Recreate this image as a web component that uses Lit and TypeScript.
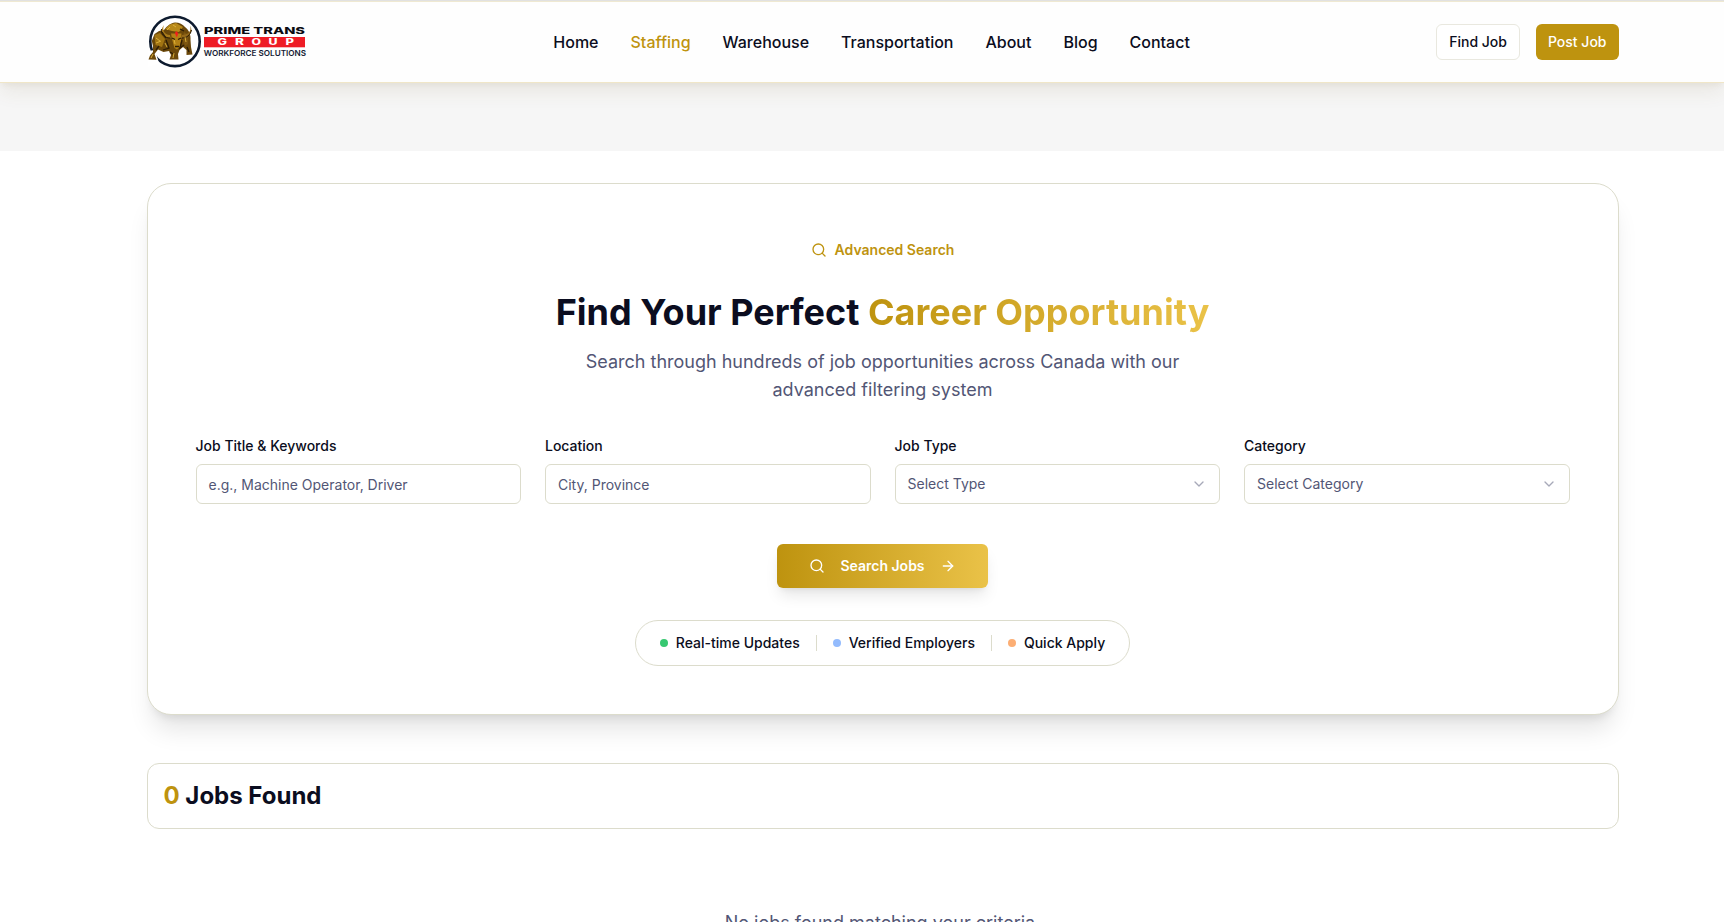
import { LitElement, html, css, svg } from "lit";
import { customElement } from "lit/decorators.js";

const searchIcon = html`<svg class="icon" viewBox="0 0 24 24"><circle cx="11" cy="11" r="8"></circle><path d="m21 21-4.3-4.3"></path></svg>`;
const arrowIcon = html`<svg class="icon" viewBox="0 0 24 24"><path d="M5 12h14"></path><path d="m12 5 7 7-7 7"></path></svg>`;
const chevronIcon = html`<svg class="icon chevron" viewBox="0 0 24 24"><path d="m6 9 6 6 6-6"></path></svg>`;

const bull = svg`
  <circle cx="27" cy="26.4" r="24.7" fill="#fff" stroke="#0d1a2e" stroke-width="2.600"></circle>
  <path d="M0 36 7 35 11 48 0 52z" fill="#fff"></path>
  <path d="M16 15 C19 11 23 8 27 7.600 C31 7.500 35 9.500 37 12 C41 15 43 20 42.500 25 L43 32 L44.500 39.500 L38.500 40 L38.500 35 L35 32 L31.500 35 L30 39 L30.500 44.500 L21.500 44.600 L23 40 L21 36 L15.500 37 L10 34.500 L6.500 39 L8.500 44.800 L.5 44.600 L2 40.500 L5 37 L5 31 L3.800 26 L6.500 19 L11 16 Z" fill="#6b480a"></path>
  <path d="M17 14 22 9.500 28 8 35 12 31 17 24 16z" fill="#b88919"></path>
  <path d="M6.500 20 12 18 17 24 14 32 7.500 30z" fill="#a17412"></path>
  <path d="M36 17 40.500 20 40 29 37.500 31 34.500 25z" fill="#7d5610"></path>
  <path d="M23 18.500 33.500 18.500 33 26 31.500 32 29 34.500 26.500 33 24.500 26z" fill="#b28015"></path>
  <path d="M16 10 C14 15 16 19.500 22 20 L22.500 23 C15 23.500 10.500 17 16 10z" fill="#a97c1c"></path>
  <path d="M42 10.500 C44 16 40 20 34 20 L33 23 C41 23.500 46 17 42 10.500z" fill="#94691a"></path>
  <path d="M13.500 14c-1 5 3 9 8.500 9M43.500 15c-1 5-5 8-9.500 8" stroke="#2c1c04" stroke-width="1" fill="none"></path>
  <path d="M19 15l3-3M25 10l3 2M8 23l4 3M8 28l5-2M17 28l2 4M26 24l1 5M37 22l1 5M26 38l-1 5M5 39l-2 4" stroke="#e0b53d" stroke-width=".9" fill="none"></path>
  <path d="M18 25 21 33 15 35M34 25 32 33 36 30M24 23l3 1.500M33 23l-3 1.500M11 31l-3 4M27 31.500h4M22 37l3 2M14 17l4 6M32 14l4 2M39 32l2 5" stroke="#2c1c04" stroke-width="1.300" fill="none"></path>
  <path d="M26.800 18 28.600 16 30.200 18.500 28.800 22.500z" fill="#f0201c"></path>`;

@customElement("brand-logo")
class BrandLogo extends LitElement {
  static styles = css`
    :host { display: block; width: 160px; height: 54px; }
    svg { display: block; width: 160px; height: 54px; }
    text { font-family: Inter, "Liberation Sans", sans-serif; }
    .name { font-size: 9.600px; font-weight: 800; fill: #0b0b12; }
    .group { font-size: 8.400px; font-weight: 800; fill: #fff; }
    .tag { font-size: 7.800px; font-weight: 600; fill: #141b33; }
  `;
  render() {
    return html`<svg viewBox="0 0 160 54">
      ${bull}
      <text class="name" x="56" y="18.900" textLength="101" lengthAdjust="spacingAndGlyphs">PRIME TRANS</text>
      <rect x="56" y="22" width="101" height="10.300" fill="#ee1c25"></rect>
      <text class="group" x="69.500" y="30.300" textLength="9.500" lengthAdjust="spacingAndGlyphs">G</text>
      <text class="group" x="87" y="30.300" textLength="9" lengthAdjust="spacingAndGlyphs">R</text>
      <text class="group" x="103.500" y="30.300" textLength="9.500" lengthAdjust="spacingAndGlyphs">O</text>
      <text class="group" x="120.500" y="30.300" textLength="9" lengthAdjust="spacingAndGlyphs">U</text>
      <text class="group" x="137.500" y="30.300" textLength="8.500" lengthAdjust="spacingAndGlyphs">P</text>
      <text class="tag" x="55.800" y="41" textLength="102.200" lengthAdjust="spacingAndGlyphs">WORKFORCE SOLUTIONS</text>
    </svg>`;
  }
}

@customElement("app-root")
class AppRoot extends LitElement {
  static styles = css`
    :host {
      display: block; height: 922px; overflow: hidden; background: #fff;
      font-family: Inter, "Liberation Sans", sans-serif; font-size: 14px; line-height: 20px; color: #0b0d20;
    }
    * { box-sizing: border-box; }
    .icon { width: 16px; height: 16px; fill: none; stroke: currentColor; stroke-width: 2; stroke-linecap: round; stroke-linejoin: round; flex: none; }
    .header {
      height: 83px; border-top: 1px solid #e1e1e1; border-bottom: 1px solid #f0e6c8; background: #fefefe;
      box-shadow: inset 0 1px 0 #efe9d2, 0 10px 18px -1px rgba(110, 90, 30, .09), 0 4px 6px -2px rgba(110, 90, 30, .07);
      position: relative; z-index: 1;
    }
    .bar { width: 1472px; height: 81px; margin-left: 146.5px; padding: 1px 0 0 1.5px; display: flex; align-items: center; justify-content: space-between; }
    .nav { display: flex; gap: 32px; font-size: 16px; line-height: 24px; font-weight: 500; margin-left: -1px; }
    .active { color: #be930f; }
    .actions { display: flex; gap: 16px; }
    .btn { height: 36px; padding: 0 12px; border-radius: 6px; font-weight: 500; display: flex; align-items: center; }
    .outline { border: 1px solid #e9e8df; background: #fff; }
    .solid { background: #be930f; color: #fff; }
    .band { height: 68px; background: #f6f6f6; }
    .content { width: 1472px; margin-left: 146.5px; padding-top: 32px; }
    .card {
      height: 532px; border: 1px solid #dcdccc; border-radius: 24px; padding: 48px; background: #fff;
      box-shadow: 0 20px 25px -5px rgba(0, 0, 0, .1), 0 8px 10px -6px rgba(0, 0, 0, .1);
      display: flex; flex-direction: column; align-items: center;
    }
    .eyebrow { height: 36px; display: flex; align-items: center; gap: 8px; color: #be930f; font-weight: 600; }
    .title { margin: 24px 0 16px; font-size: 36px; line-height: 40px; font-weight: 700; }
    .shine { background: linear-gradient(90deg, #be930f, #eac248); -webkit-background-clip: text; background-clip: text; color: transparent; }
    .lead { margin: 0; width: 672px; text-align: center; font-size: 18px; line-height: 28px; color: #525675; }
    .fields { width: 100%; display: grid; grid-template-columns: repeat(4, 1fr); gap: 24px; margin-top: 32px; }
    .field { display: flex; flex-direction: column; gap: 8px; font-weight: 500; }
    .control { height: 40px; border: 1px solid #dcdccc; border-radius: 6px; padding: 0 12px; display: flex; align-items: center; justify-content: space-between; font-weight: 400; color: #525675; }
    .typed { padding-top: 2px; }
    .chevron { opacity: .5; }
    .search {
      margin-top: 40px; width: 211px; height: 44px; border-radius: 6px; display: flex; align-items: center; justify-content: center; gap: 15.5px; flex: none;
      background: linear-gradient(90deg, #be930f, #eac248); color: #fff; font-weight: 600;
      box-shadow: 0 10px 15px -3px rgba(0, 0, 0, .1), 0 4px 6px -4px rgba(0, 0, 0, .1);
    }
    .pill { margin-top: 32px; height: 46px; border: 1px solid #dcdccc; border-radius: 23px; padding: 0 24px; display: flex; align-items: center; gap: 16px; font-weight: 500; flex: none; }
    .perk { display: flex; align-items: center; gap: 8px; }
    .dot { width: 8px; height: 8px; border-radius: 50%; }
    .green { background: #37c871; }
    .blue { background: #93bbfd; }
    .orange { background: #fcae74; }
    .rule { width: 1px; height: 16px; background: #dcdccc; }
    .found { margin-top: 48px; height: 66px; border: 1px solid #dcdccc; border-radius: 12px; padding: 16px; background: #fff; font-size: 24px; line-height: 32px; font-weight: 700; }
    .empty { margin-top: 80px; text-align: center; font-size: 18px; line-height: 28px; color: #525675; }
  `;

  render() {
    const links = ["Home", "Staffing", "Warehouse", "Transportation", "About", "Blog", "Contact"];
    return html`
      <header class="header">
        <div class="bar">
          <brand-logo></brand-logo>
          <nav class="nav">${links.map((l) => html`<span class=${l === "Staffing" ? "active" : "link"}>${l}</span>`)}</nav>
          <div class="actions"><span class="btn outline">Find Job</span><span class="btn solid">Post Job</span></div>
        </div>
      </header>
      <div class="band"></div>
      <main class="content">
        <section class="card">
          <div class="eyebrow">${searchIcon}<span>Advanced Search</span></div>
          <h2 class="title">Find Your Perfect <span class="shine">Career Opportunity</span></h2>
          <p class="lead">Search through hundreds of job opportunities across Canada with our advanced filtering system</p>
          <div class="fields">
            <div class="field"><span>Job Title &amp; Keywords</span><div class="control typed">e.g., Machine Operator, Driver</div></div>
            <div class="field"><span>Location</span><div class="control typed">City, Province</div></div>
            <div class="field"><span>Job Type</span><div class="control"><span>Select Type</span>${chevronIcon}</div></div>
            <div class="field"><span>Category</span><div class="control"><span>Select Category</span>${chevronIcon}</div></div>
          </div>
          <div class="search">${searchIcon}<span>Search Jobs</span>${arrowIcon}</div>
          <div class="pill">
            <span class="perk"><i class="dot green"></i>Real-time Updates</span><i class="rule"></i>
            <span class="perk"><i class="dot blue"></i>Verified Employers</span><i class="rule"></i>
            <span class="perk"><i class="dot orange"></i>Quick Apply</span>
          </div>
        </section>
        <section class="found"><span class="active">0</span> Jobs Found</section>
        <div class="empty">No jobs found matching your criteria.</div>
      </main>`;
  }
}
